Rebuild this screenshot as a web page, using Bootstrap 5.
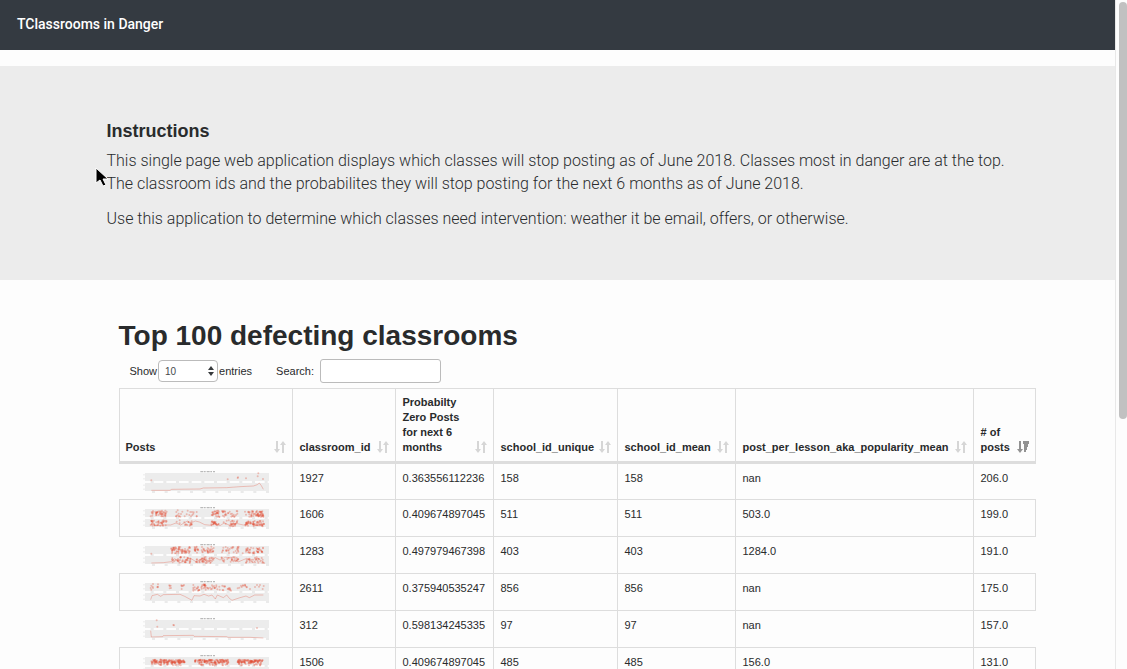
<!DOCTYPE html>
<html lang="en">
<head>
<meta charset="utf-8">
<meta name="viewport" content="width=device-width, initial-scale=1">
<title>TClassrooms in Danger</title>
<link rel="stylesheet" href="https://cdn.jsdelivr.net/npm/bootstrap@5.3.0/dist/css/bootstrap.min.css">
<style>
  body { background: #fdfdfd; color: #292b2c; font-family: "Liberation Sans", Arial, sans-serif; font-size: 11px; line-height: 15px; }
  .app { height: 100vh; }
  .page-view { overflow: hidden; border-right: 1px solid #e8e8e8; }
  .top-bar { background: #343a41; min-height: 50px; padding: 0 17px 2px; }
  .top-bar .navbar-brand { font: 500 14px/24px Roboto, sans-serif; color: #fff; }
  .page-wrap { max-width: 932px; padding: 0 15px; }
  .intro { background: #ececec; padding: 53px 0 50px; }
  .intro h2 { font-size: 18px; line-height: 24px; font-weight: 700; margin-bottom: 6px; }
  .intro p { font: 300 16px/23px Roboto, sans-serif; margin-bottom: 12px; }
  .intro p:last-child { margin-bottom: 0; }
  .listing { padding: 39px 0 0 12px; }
  .listing h1 { font-size: 28px; line-height: 34px; font-weight: 700; margin-bottom: 6px; }
  .controls { padding-left: 11px; margin-bottom: 5px; height: 24px; }
  .length-box { width: 60px; margin: 0 1px; }
  .length-box select { width: 60px; height: 22px; border: 1px solid #bbb; border-radius: 4px; padding: 0 6px; font-size: 10px; color: #464a4c; background: #fff; appearance: none; }
  .length-box svg { position: absolute; right: 4px; top: 6px; pointer-events: none; }
  .search-box { width: 121px; height: 24px; border: 1px solid #bbb; border-radius: 3px; padding: 2px 6px; margin-left: 6px; background: #fff; }
  .grid-table { table-layout: fixed; width: 916px; border-collapse: collapse; }
  .grid-table th { border: 1px solid #ddd; border-bottom: 3px solid #ddd; padding: 6px 6px 6px 7px; vertical-align: bottom; }
  .grid-table th:first-child { padding-left: 6px; }
  .grid-table td { height: 37px; padding: 7px 0 0 7px; vertical-align: top; border-left: 1px solid #ddd; }
  .grid-table td:first-child { padding: 5px 0 0 3px; border-left: 0; text-align: center; }
  .grid-table tbody tr:nth-child(even) { border: 1px solid #ddd; }
  .sorter { color: #d6d6d6; flex: none; margin-bottom: 2px; }
  .sorter.sorted { color: #929292; }
  .plot { display: block; margin: 0 auto; }
  .scroll-rail { width: 11px; background: #fdfdfd; padding: 2px 0 0 3px; }
  .scroll-thumb { height: 62.5%; background: #c1c1c1; border-radius: 4px; }
  .pointer { position: absolute; left: 95px; top: 167px; }
</style>
</head>
<body>
<svg class="d-none">
  <symbol id="sort-both" viewBox="0 0 12 12"><path fill="currentColor" d="M2 0h2v8h2L3 12 0 8h2zM8 12h2V4h2L9 0 6 4h2z"/></symbol>
  <symbol id="sort-desc" viewBox="0 0 12 12"><path fill="currentColor" d="M2 0h2v8h2L3 12 0 8h2zM6 0h6v3H6zM7 3h4v3H7zM7 6h3v3H7zM7 9h2v2H7z"/></symbol>
</svg>
<div class="app d-flex overflow-hidden">
  <div class="page-view flex-grow-1">
    <nav class="top-bar navbar mb-3"><a class="navbar-brand p-0 m-0" href="#">TClassrooms in Danger</a></nav>
    <section class="intro">
      <div class="page-wrap mx-auto">
        <h2>Instructions</h2>
        <p>This single page web application displays which classes will stop posting as of June 2018. Classes most in danger are at the top.<br>The classroom ids and the probabilites they will stop posting for the next 6 months as of June 2018.</p>
        <p>Use this application to determine which classes need intervention: weather it be email, offers, or otherwise.</p>
      </div>
    </section>
    <main class="page-wrap mx-auto">
      <div class="listing">
        <h1>Top 100 defecting classrooms</h1>
        <div class="controls d-flex align-items-center">
          <label for="len">Show</label>
          <div class="length-box position-relative">
            <select id="len" class="d-block"><option>10</option><option>25</option><option>50</option></select>
            <svg width="6" height="10" viewBox="0 0 6 10"><path fill="#373a3c" d="M3 0l3 4H0zM3 10L0 6h6z"/></svg>
          </div>
          <span>entries</span>
          <label class="ms-4" for="find">Search:</label>
          <input id="find" class="search-box" type="search">
        </div>
        <table class="grid-table">
          <colgroup><col width="173"><col width="103"><col width="98"><col width="124"><col width="118"><col width="238"><col width="62"></colgroup>
          <thead><tr id="heads"></tr></thead>
          <tbody id="rows"></tbody>
        </table>
      </div>
    </main>
  </div>
  <div class="scroll-rail"><div class="scroll-thumb"></div></div>
</div>
<svg class="pointer" width="13" height="20" viewBox="0 0 13 20"><path d="M1 1v15l4-3 3 6 3-1-3-6h5z" fill="#000" stroke="#fff" stroke-width="1"/></svg>
<script src="https://cdn.jsdelivr.net/npm/bootstrap@5.3.0/dist/js/bootstrap.bundle.min.js"></script>
<script>
const heads = ['Posts', 'classroom_id', 'Probabilty Zero Posts for next 6 months', 'school_id_unique', 'school_id_mean', 'post_per_lesson_aka_popularity_mean', '# of posts'];
document.getElementById('heads').innerHTML = heads.map((h, i) =>
  `<th scope="col"><div class="d-flex justify-content-between align-items-end"><span>${h}</span><svg class="sorter${i === 6 ? ' sorted' : ''}" width="12" height="12"><use href="#sort-${i === 6 ? 'desc' : 'both'}"/></svg></div></th>`).join('');

// Each cluster is [x start, x end, dot count, y top, y bottom].
const rows = [
  { cells: ['1927', '0.363556112236', '158', '158', 'nan', '206.0'],
    clusters: [], dots: [[34,40],[263,37],[293,33],[294,31],[318,34],[355,19],[353,28],[369,36]],
    line: '34,70 90,70 95,67 180,66 190,63 260,62 300,59 340,57 352,53 358,48 364,56 370,67' },
  { cells: ['1606', '0.409674897045', '511', '511', '503.0', '199.0'],
    clusters: [[32,80,46,22,42],[108,178,24,22,42],[212,238,28,22,42],[246,292,28,24,42],[315,372,60,24,42],[32,80,40,52,69],[108,162,18,52,68],[212,238,24,54,70],[246,292,26,52,70],[315,372,56,54,70]], dots: [],
    line: '32,52 44,68 76,66 92,66 108,60 122,66 142,54 150,61 166,54 178,57 194,65 214,67 224,60 240,68 252,60 270,67 288,61 310,66 330,60 350,68 370,60' },
  { cells: ['1283', '0.497979467398', '403', '403', '1284.0', '191.0'],
    clusters: [[94,152,62,21,41],[164,222,46,20,40],[244,300,28,20,40],[318,372,42,22,40],[94,152,38,51,69],[164,222,40,51,69],[244,300,24,51,66],[318,372,28,52,69]], dots: [[34,41],[308,40]],
    line: '34,69 70,68 94,65 104,56 122,68 150,54 168,65 188,55 204,67 226,53 240,60 256,52 284,54 294,66 320,55 340,68 352,54 370,66' },
  { cells: ['2611', '0.375940535247', '856', '856', 'nan', '175.0'],
    clusters: [[32,40,6,20,42],[50,56,4,22,32],[88,96,5,22,36],[122,132,6,22,36],[158,178,14,24,42],[182,240,34,22,38],[246,274,14,24,42],[292,372,18,22,38]], dots: [],
    line: '32,68 36,56 52,52 62,58 70,53 120,52 134,58 156,70 162,56 180,57 192,52 206,57 216,54 226,66 232,54 250,62 260,54 268,64 276,70 300,62 318,57 328,62 344,54 370,54' },
  { cells: ['312', '0.598134245335', '97', '97', 'nan', '157.0'],
    clusters: [], dots: [[50,19],[52,38],[100,33],[102,34],[351,42]],
    line: '32,50 34,69 68,68 70,65 160,64 162,67 260,68 264,70 330,70 370,72' },
  { cells: ['1506', '0.409674897045', '485', '485', '156.0', '131.0'],
    clusters: [[34,134,130,26,36],[36,134,24,36,43],[164,266,120,26,36],[168,266,24,36,43],[292,368,100,26,36],[294,366,18,36,43]], dots: [],
    line: '34,60 120,64 190,56 260,66 370,60' }
];
let seed = 7;
const rnd = () => (seed = seed * 16807 % 2147483647) / 2147483647;
function plot(r) {
  let s = '<rect x="15" y="18" width="372" height="24" fill="#ececec"/><rect x="15" y="48" width="372" height="24" fill="#ececec"/>';
  s += '<path d="M181 14h44" stroke="#777" stroke-width="4" stroke-dasharray="9 2 5 3" opacity=".5"/>';
  for (let x = 32; x < 386; x += 38) s += `<path d="M${x} 45h9M${x + 4} 75h9" stroke="#aaa" stroke-width="4" opacity=".3"/>`;
  s += '<path d="M12 22v3M12 34v3M12 53v3M12 65v3" stroke="#aaa" stroke-width="3" opacity=".4"/>';
  s += `<polyline points="${r.line}" fill="none" stroke="#e24a33" stroke-width="3" opacity=".3"/>`;
  const dot = (x, y) => `<circle cx="${x.toFixed(0)}" cy="${y.toFixed(0)}" r="3" fill="#e24a33" opacity=".32"/>`;
  for (const [a, b, n, t, u] of r.clusters) for (let i = 0; i < n; i++) s += dot(a + rnd() * (b - a), t + rnd() * (u - t));
  for (const [x, y] of r.dots) s += dot(x, y);
  return `<svg class="plot" width="134" height="25" viewBox="0 6 402 75" role="img" aria-label="Posts over time">${s}</svg>`;
}
document.getElementById('rows').innerHTML = rows.map(r => `<tr><td>${plot(r)}</td>${r.cells.map(c => `<td>${c}</td>`).join('')}</tr>`).join('');
</script>
</body>
</html>
